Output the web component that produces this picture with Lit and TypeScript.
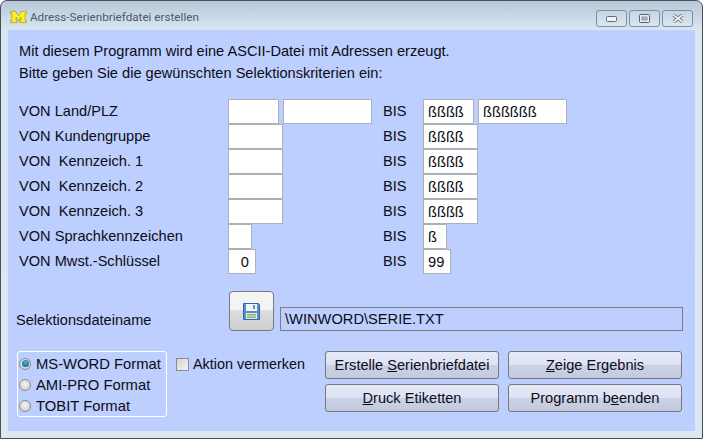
import { LitElement, html, css, svg } from "lit";
import { customElement } from "lit/decorators.js";

type Row = { label: string; l: [string, string][]; r: [string, string][] };

const rows: Row[] = [
  { label: "VON Land/PLZ", l: [["w51", ""], ["w89", ""]], r: [["w51", "ßßßß"], ["w89", "ßßßßßß"]] },
  { label: "VON Kundengruppe", l: [["w55", ""]], r: [["w55", "ßßßß"]] },
  { label: "VON  Kennzeich. 1", l: [["w55", ""]], r: [["w55", "ßßßß"]] },
  { label: "VON  Kennzeich. 2", l: [["w55", ""]], r: [["w55", "ßßßß"]] },
  { label: "VON  Kennzeich. 3", l: [["w55", ""]], r: [["w55", "ßßßß"]] },
  { label: "VON Sprachkennzeichen", l: [["w24", ""]], r: [["w24", "ß"]] },
  { label: "VON Mwst.-Schlüssel", l: [["w28 num", "0"]], r: [["w28", "99"]] },
];

@customElement("app-root")
export class AppRoot extends LitElement {
  static styles = css`
    :host { display: block; width: 703px; height: 439px; background: #fff; overflow: hidden;
      font-family: "Liberation Sans", Arial, sans-serif; font-size: 14.6px; color: #0c0c14; }
    .win { box-sizing: border-box; width: 703px; height: 439px; border: 1px solid #4a4f55; border-radius: 7px 7px 0 0;
      background: linear-gradient(#b7c8d9 0, #d9e7f3 29px, #dbe8f3 100%); display: flex; flex-direction: column; padding: 0 7px 7px; }
    .title { height: 29px; flex: none; display: flex; align-items: center; }
    .logo { margin: 3px 3px 0 2px; flex: none; }
    .caption { font-family: Roboto, sans-serif; font-size: 11.7px; color: #4c5864; margin-top: 3px; flex: 1; }
    .ctl { display: flex; gap: 2px; margin: 9px 2px 0 0; align-self: flex-start; }
    .cb { box-sizing: border-box; width: 31px; height: 17px; border: 1px solid #7f8ea3; border-radius: 3px;
      background: linear-gradient(#c7d5e3, #dae6f1); display: flex; align-items: center; justify-content: center; }
    .client { flex: 1; background: #bccffe; display: flex; flex-direction: column; padding: 10px 12px 0 11px; min-height: 0; }
    .intro { line-height: 22px; white-space: pre; }
    .grid { display: flex; flex-direction: column; margin-top: 15px; }
    .row { display: grid; grid-template-columns: 209px 155px 40px 1fr; height: 25px; align-items: center; white-space: pre; }
    .row > span { position: relative; top: -1px; }
    .cells { display: flex; gap: 4px; height: 25px; }
    .in { box-sizing: border-box; height: 25px; background: #fff; border: 1px solid #acb0b8; font-size: 14.67px; padding: 3px 0 0 4px; line-height: 19px; white-space: pre; overflow: hidden; }
    .w51 { width: 51px; } .w89 { width: 89px; } .w55 { width: 55px; } .w24 { width: 24px; } .w28 { width: 28px; }
    .num { text-align: right; padding-right: 6px; }
    .file { display: flex; margin-top: 17px; margin-left: -3px; align-items: flex-end; height: 40px; }
    .file .lbl { width: 213px; padding-bottom: 3px; }
    .save { box-sizing: border-box; width: 45px; height: 40px; border: 1px solid #7a7a7a; border-radius: 4px;
      background: linear-gradient(#f4f4f4 0 45%, #dcdcdc 50%, #d0d0d0 100%); display: flex; align-items: center; justify-content: center; padding: 0; }
    .path { box-sizing: border-box; margin-left: 6px; width: 403px; height: 24px; border: 1px solid #7d7d7d; background: #bccffe; padding: 2px 0 0 4px; line-height: 19px; font-size: 14.67px; }
    .bottom { display: flex; margin-top: 20px; margin-left: -2px; }
    .group { box-sizing: border-box; width: 150px; height: 66px; border: 1px solid #fff; border-radius: 3px; padding: 1px 0 0 1px; display: flex; flex-direction: column; font-size: 14.8px; }
    .opt { display: flex; align-items: center; height: 21px; gap: 5px; white-space: pre; }
    .radio { flex: none; width: 12px; height: 12px; border-radius: 50%; border: 1px solid #8b8b8b; box-sizing: border-box;
      background: radial-gradient(circle at 50% 40%, #f3f3f3, #c9c9c9); display: flex; align-items: center; justify-content: center; }
    .radio.on i { display: block; width: 7px; height: 7px; border-radius: 50%; background: radial-gradient(circle at 50% 35%, #4fb4e4, #06507f); }
    .check { display: flex; align-items: flex-start; gap: 4px; margin-left: 9px; width: 149px; white-space: pre; line-height: 21px; padding-top: 3px; height: 30px; font-size: 14.4px; }
    .box { flex: none; box-sizing: border-box; width: 13px; height: 13px; margin-top: 4px; border: 1px solid #8b8b8b; background: linear-gradient(135deg, #d4d4d4, #f4f4f4); }
    .btns { display: grid; grid-template-columns: 174px 174px; grid-auto-rows: 28px; gap: 5px 9px; }
    .btn { box-sizing: border-box; border: 1px solid #777; border-radius: 3px; font: inherit; color: inherit; padding: 0 0 1px; margin: 0;
      background: linear-gradient(#e5e9f8 0, #dde3f6 48%, #ccd2e6 52%, #c3c9de 100%); white-space: pre; }
  `;

  private logo() {
    return html`<svg class="logo" width="17" height="14" viewBox="0 0 18 14">
      <path d="M.5 1h5.500l3 5 3-5h5.500v2h-1.500v8h1.500v2h-7v-2h1v-4l-2.500 4.500-2.500-4.500v4h1v2h-7v-2h1.500v-8h-1.500z" fill="#fdf21c" stroke="#a89a35" stroke-width=".8"/>
    </svg>`;
  }

  private floppy() {
    return svg`<svg width="17" height="17" viewBox="0 0 17 17">
      <path d="M.5.5h15l1 1v15H.5z" fill="#5d8fd0" stroke="#2e66ad"/>
      <rect x="3" y="1" width="11" height="7" fill="#f2f6fb"/>
      <rect x="10" y="2" width="2" height="4" fill="#5d8fd0"/>
      <rect x="3" y="10" width="11" height="6" fill="#e6efe2"/>
      <rect x="4" y="11" width="9" height="1.500" fill="#86b36e"/>
      <rect x="4" y="13.500" width="9" height="1.500" fill="#86b36e"/>
    </svg>`;
  }

  render() {
    return html`<div class="win">
      <div class="title">
        ${this.logo()}
        <span class="caption">Adress-Serienbriefdatei erstellen</span>
        <div class="ctl">
          <div class="cb"><svg width="11" height="6" viewBox="0 0 11 6"><rect x=".5" y=".5" width="10" height="5" rx="1" fill="#f2f2f2" stroke="#5f6b78"/></svg></div>
          <div class="cb"><svg width="11" height="9" viewBox="0 0 11 9"><rect x=".5" y=".5" width="10" height="8" rx="1" fill="#e8eef4" stroke="#56626f"/><rect x="3" y="3" width="5" height="3" fill="#b6c5d4" stroke="#56626f" stroke-width=".6"/></svg></div>
          <div class="cb"><svg width="12" height="9" viewBox="0 0 12 9"><path d="M1.500 1L10.500 8M10.500 1L1.500 8" stroke="#5c6773" stroke-width="3.400"/><path d="M1.500 1L10.500 8M10.500 1L1.500 8" stroke="#f4f4f4" stroke-width="1.800"/></svg></div>
        </div>
      </div>
      <div class="client">
        <div class="intro">Mit diesem Programm wird eine ASCII-Datei mit Adressen erzeugt.
Bitte geben Sie die gewünschten Selektionskriterien ein:</div>
        <div class="grid">
          ${rows.map(
            (r) => html`<div class="row">
              <span>${r.label}</span>
              <div class="cells">${r.l.map(([c, v]) => html`<div class="in ${c}">${v}</div>`)}</div>
              <span>BIS</span>
              <div class="cells">${r.r.map(([c, v]) => html`<div class="in ${c}">${v}</div>`)}</div>
            </div>`
          )}
        </div>
        <div class="file">
          <span class="lbl">Selektionsdateiname</span>
          <button class="save">${this.floppy()}</button>
          <div class="path">\\WINWORD\\SERIE.TXT</div>
        </div>
        <div class="bottom">
          <div class="group">
            <div class="opt"><span class="radio on"><i></i></span>MS-WORD Format</div>
            <div class="opt"><span class="radio"></span>AMI-PRO Format</div>
            <div class="opt"><span class="radio"></span>TOBIT Format</div>
          </div>
          <div class="check"><span class="box"></span>Aktion vermerken</div>
          <div class="btns">
            <button class="btn">Erstelle <u>S</u>erienbriefdatei</button>
            <button class="btn"><u>Z</u>eige Ergebnis</button>
            <button class="btn"><u>D</u>ruck Etiketten</button>
            <button class="btn">Programm b<u>e</u>enden</button>
          </div>
        </div>
      </div>
    </div>`;
  }
}
